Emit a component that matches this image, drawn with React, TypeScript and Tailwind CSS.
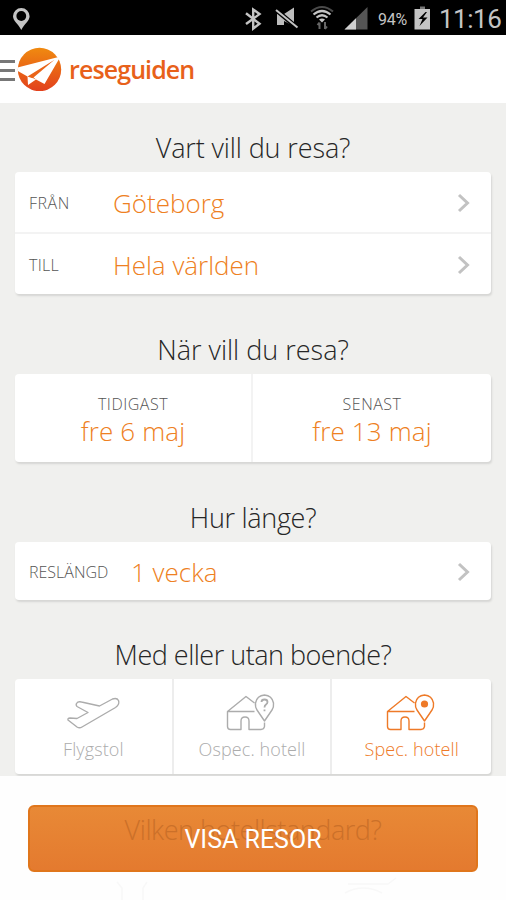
import clsx from "clsx"
import type { ReactNode } from "react"

const StatusBar = () => {
	return (
		<div className="flex h-[35px] items-center bg-black text-[#c4c4c4]">
			<svg className="ml-3 h-[35px] w-5" viewBox="0 0 20 35" fill="none">
				<path
					d="M9.300 8a8.300 8.300 0 0 0-8.300 8.300c0 4.400 5.100 7.600 8.300 13.700 3.200-6.100 8.300-9.300 8.300-13.700A8.300 8.300 0 0 0 9.300 8z"
					fill="#c4c4c4"
				/>
				<circle cx="9.300" cy="16" r="4.900" fill="#000" />
			</svg>
			<svg className="ml-[208px] h-[35px] w-[132px]" viewBox="240 0 132 35" fill="none">
				<path
					d="M246 13.300l13.500 10.500-6.300 4.700V9.500l6.300 4.600L246 24"
					stroke="#c4c4c4"
					strokeWidth="2.400"
				/>
				<path d="M277 14h7l10-6.500V26l-10-5h-7z" fill="#bdbdbd" />
				<path d="M277 14h7v11h-7z" fill="#bdbdbd" />
				<path d="M275.500 9.500l21.500 18" stroke="#000" strokeWidth="4.500" />
				<path d="M276 10l21.500 17.500" stroke="#c4c4c4" strokeWidth="2" />
				<path d="M311 11.500q11-9 22 0" stroke="#4a4a4a" strokeWidth="2" />
				<path d="M313.500 14.500q8.500-7 17 0M316.500 17.500q5.500-4.500 11 0" stroke="#c4c4c4" strokeWidth="2.200" />
				<path d="M319 19.500q3-2 6 0l-3 3z" fill="#c4c4c4" />
				<path
					d="M319.500 29v-6.500m-2 2.500l2-2.500M325 22v7m2-2.500l-2 2.500"
					stroke="#666"
					strokeWidth="2"
				/>
				<path d="M344.500 29.500L367.500 7v22.500z" fill="#555" />
				<path d="M344.500 29.500L356 18.300v11.200z" fill="#d0d0d0" />
			</svg>
			<span className="ml-[6px] mt-[4px] w-[33px] whitespace-nowrap font-[Roboto] text-[16px] font-normal tracking-[-0.2px]">
				94%
			</span>
			<svg className="ml-[2px] h-[35px] w-[18px]" viewBox="412 0 18 35">
				<path d="M419 6.500h5V9h-5z" fill="#777" />
				<path d="M413.500 9h15.500v20.500h-15.500z" fill="#c4c4c4" />
				<path d="M424.500 12l-7 7h4l-3 7 8-8.500h-4.500l4-5.500z" fill="#000" />
			</svg>
			<span className="ml-[8px] mt-[3px] whitespace-nowrap font-[Roboto] text-[26px] font-normal tracking-[-0.5px]">
				11:16
			</span>
		</div>
	)
}

const Header = () => {
	return (
		<header className="flex h-[68px] items-center bg-white">
			<div className="mt-[2px] flex w-[15px] flex-col gap-[6px]">
				<span className="h-[3px] bg-[#777]" />
				<span className="h-[3px] bg-[#777]" />
				<span className="h-[3px] bg-[#777]" />
			</div>
			<svg className="ml-[2px] h-11 w-[45px]" viewBox="17 47 45 44">
				<defs>
					<linearGradient id="logo" x1="0" y1="0" x2="0" y2="1">
						<stop offset="0" stopColor="#f08a10" />
						<stop offset="1" stopColor="#e2401c" />
					</linearGradient>
				</defs>
				<circle cx="39.500" cy="69.500" r="21.700" fill="url(#logo)" />
				<path d="M17.500 67.500L60.500 56.500 44.500 84l-8.500-4.500-8 5.500-.5-8.500L17.800 71z" fill="#fff" />
				<path d="M27.500 76.500L54.500 59.800 33.500 77.500l2.500 2z" fill="#ea6418" />
				<path d="M28.500 78l5.500.5-6 6z" fill="#fff" />
			</svg>
			<span className="ml-[7px] -mt-[1px] font-['Open_Sans'] text-[25px] font-semibold leading-8 tracking-[-0.9px] text-[#e8611a]">
				reseguiden
			</span>
		</header>
	)
}

const Heading = ({ children, className }: { children: ReactNode; className?: string }) => {
	return (
		<h2
			className={clsx(
				"flex items-end justify-center whitespace-nowrap pb-[6px] text-[27px] leading-9 text-[#262626]",
				className,
			)}
		>
			{children}
		</h2>
	)
}

const cardClass = "mx-[15px] rounded-[4px] bg-white shadow-[1px_2px_2px_0px_#d6d6d4]"

const Chevron = () => {
	return (
		<svg className="ml-auto mr-[20px] h-5 w-[14px]" viewBox="0 0 14 20" fill="none">
			<path d="M2 2l8.500 8L2 18" stroke="#c2c2c2" strokeWidth="3" />
		</svg>
	)
}

type RowProps = {
	label: string
	value: string
	labelClass: string
}

const Row = ({ label, value, labelClass }: RowProps) => {
	return (
		<div className="flex h-full items-center pl-[14px] pt-[2px]">
			<span className={clsx("whitespace-nowrap text-[16px] text-[#555]", labelClass)}>{label}</span>
			<span className="whitespace-nowrap text-[26px] leading-9 text-[#ee8022]">{value}</span>
			<Chevron />
		</div>
	)
}

const DateCell = ({ label, value }: { label: string; value: string }) => {
	return (
		<div className="flex flex-col items-center pt-[18px]">
			<span className="text-[16px] leading-6 tracking-[0.5px] text-[#555]">{label}</span>
			<span className="-mt-[1px] text-[26px] leading-8 tracking-[0.15px] text-[#ee8022]">{value}</span>
		</div>
	)
}

const PlaneIcon = () => {
	return (
		<svg className="h-10 w-[56px]" viewBox="65 692 56 40" fill="none" stroke="currentColor" strokeWidth="1.400" strokeLinejoin="round">
			<path d="M76.500 703.500q1.500-2.500 5-1.500l18 4 13-7q4.500-1.500 6 1.500 1.500 4-3 7L82 727q-2.500 1.500-5 0l-9-7q-.5-2 2-2l7 .5 11-6-11-6q-1.500-1.500-.5-3z" />
		</svg>
	)
}

const HouseIcon = ({ specified }: { specified?: boolean }) => {
	return (
		<svg className="h-10 w-[56px]" viewBox="224 692 56 40" fill="none" stroke="currentColor" strokeWidth="1.400" strokeLinejoin="round">
			<path d="M254.500 711.500H227.500L246 696.500l8.500 6.500M227.500 711.500v15q0 3 3 3h10.500v-8.500q0-4 4-4t4 4v8.500h12q3 0 3.500-3v-4" />
			<path d="M264.500 721l-7.500-11q-2-3-1.500-7 1.500-7.500 9-8 7.500.5 9 8 .5 4-1.500 7z" />
			{specified ? (
				<circle cx="264.500" cy="704" r="3.600" fill="currentColor" stroke="none" />
			) : (
				<path d="M261.500 702q0-2.500 3-2.500t3 2.500q0 1.500-1.500 2.500t-1.500 3m0 2v1.800" strokeWidth="1.800" />
			)}
		</svg>
	)
}

const Option = ({ label, active, children }: { label: string; active?: boolean; children: ReactNode }) => {
	return (
		<div
			className={clsx(
				"flex flex-col items-center pt-[13px]",
				active ? "text-[#ee7a28]" : "text-[#acacac]",
			)}
		>
			{children}
			<span className="mt-[3px] whitespace-nowrap text-[18px] leading-7 tracking-[0.1px]">{label}</span>
		</div>
	)
}

const App = () => {
	return (
		<div className="relative h-[900px] w-[506px] overflow-hidden bg-[#f0f0ee] font-['Open_Sans',sans-serif] font-light">
			<StatusBar />
			<Header />

			<Heading className="h-[69px] tracking-[-0.12px]">Vart vill du resa?</Heading>
			<div className={clsx(cardClass, "grid h-[122px] grid-rows-[62px_60px] divide-y-2 divide-[#f3f3f3]")}>
				<Row label="FRÅN" value="Göteborg" labelClass="w-[84px] tracking-[0.5px]" />
				<Row label="TILL" value="Hela världen" labelClass="w-[84px] tracking-[0.3px]" />
			</div>

			<Heading className="h-20">När vill du resa?</Heading>
			<div className={clsx(cardClass, "grid h-[88px] grid-cols-2 divide-x-2 divide-[#f3f3f3]")}>
				<DateCell label="TIDIGAST" value="fre 6 maj" />
				<DateCell label="SENAST" value="fre 13 maj" />
			</div>

			<Heading className="h-20 tracking-[-0.3px]">Hur länge?</Heading>
			<div className={clsx(cardClass, "h-[58px]")}>
				<Row label="RESLÄNGD" value="1 vecka" labelClass="w-[102px]" />
			</div>

			<Heading className="h-[79px] tracking-[-0.5px]">Med eller utan boende?</Heading>
			<div className={clsx(cardClass, "grid h-[95px] grid-cols-3 divide-x-2 divide-[#ededed]")}>
				<Option label="Flygstol">
					<PlaneIcon />
				</Option>
				<Option label="Ospec. hotell">
					<HouseIcon />
				</Option>
				<Option label="Spec. hotell" active>
					<HouseIcon specified />
				</Option>
			</div>

			<div className="absolute inset-x-0 bottom-0 h-[124px] bg-[#fefefe] px-7 pt-[29px]">
				<button
					type="button"
					className="relative flex h-[67px] w-[450px] items-center justify-center rounded-[6px] border-2 border-[#e0761c] bg-linear-to-b from-[#e88936] to-[#e47a2f]"
				>
					<span className="absolute inset-x-0 top-[5px] whitespace-nowrap text-[27px] leading-9 tracking-[-0.45px] text-[#cb7029]">
						Vilken hotellstandard?
					</span>
					<span className="relative mt-[2px] font-[Roboto] text-[25px] font-normal text-white">
						VISA RESOR
					</span>
				</button>
				<svg className="h-7 w-[450px]" viewBox="28 872 450 28" fill="none" stroke="#f8f8f8" strokeWidth="1.500">
					<path d="M117 882l5 6v12M147 882l-4 6v12M345 893q18-10 37 0M348 884h40l8-6" />
				</svg>
			</div>
		</div>
	)
}

export default App
